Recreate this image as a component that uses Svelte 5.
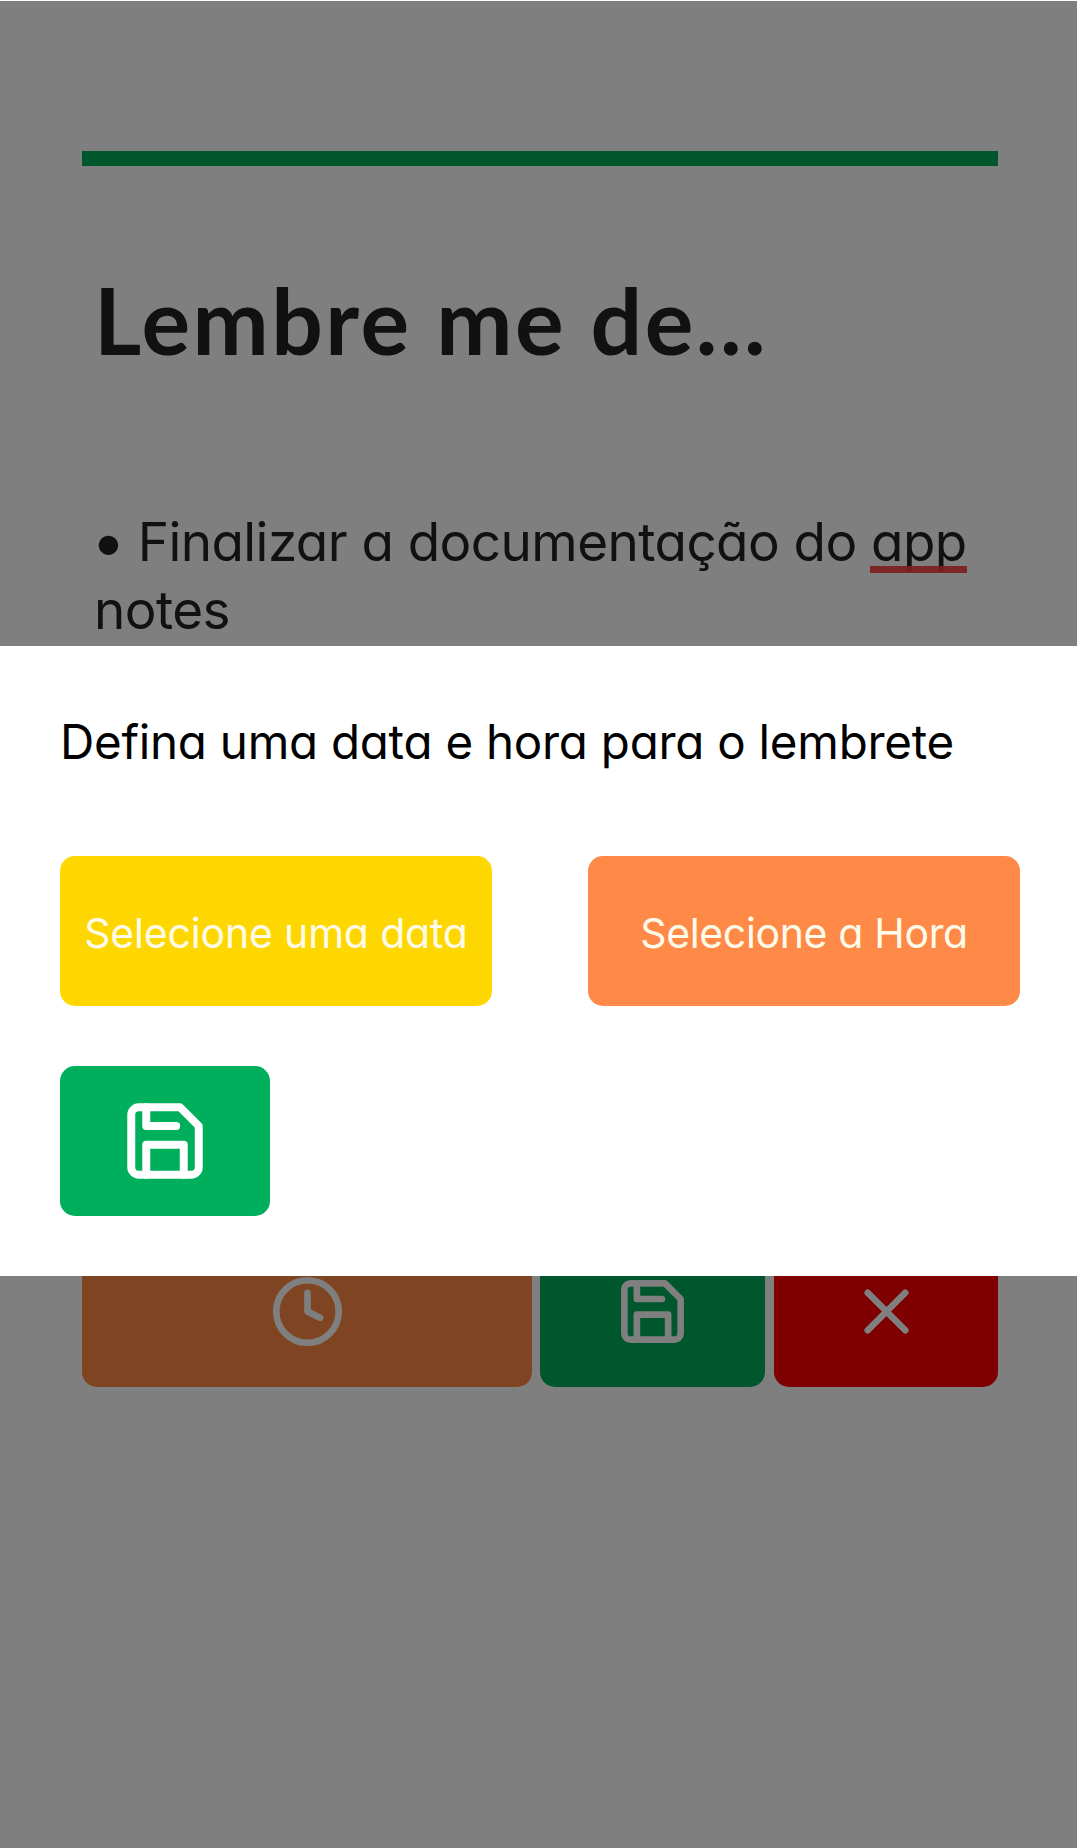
<script>
  let title = $state('Lembre me de...');
</script>

{#snippet saveIcon()}
  <svg class="icon" viewBox="0 0 24 24" aria-hidden="true">
    <path d="M19 21H5a2 2 0 0 1-2-2V5a2 2 0 0 1 2-2h11l5 5v11a2 2 0 0 1-2 2z" />
    <polyline points="17 21 17 13 7 13 7 21" />
    <polyline points="7 3 7 8 15 8" />
  </svg>
{/snippet}

<div class="screen">
  <main class="note">
    <div class="accent"></div>
    <h1>{title}</h1>
    <p class="body"><span class="bullet">•</span> Finalizar a documentação do <span class="misspelled">app</span> notes</p>
    <div class="actions">
      <button class="orange" aria-label="Lembrete">
        <svg class="icon" viewBox="0 0 24 24" aria-hidden="true">
          <circle cx="12" cy="12" r="10" />
          <polyline points="12 6 12 12 16 14" />
        </svg>
      </button>
      <button class="green" aria-label="Salvar">{@render saveIcon()}</button>
      <button class="red" aria-label="Fechar">
        <svg class="icon" viewBox="0 0 24 24" aria-hidden="true">
          <line x1="18" y1="6" x2="6" y2="18" />
          <line x1="6" y1="6" x2="18" y2="18" />
        </svg>
      </button>
    </div>
  </main>

  <div class="overlay">
    <section class="dialog">
      <h2>Defina uma data e hora para o lembrete</h2>
      <div class="pickers">
        <button class="yellow">Selecione uma data</button>
        <button class="orange">Selecione a Hora</button>
      </div>
      <button class="green save" aria-label="Salvar lembrete">{@render saveIcon()}</button>
    </section>
  </div>
</div>

<style>
  :global(body) {
    margin: 0;
    background: #fff;
  }
  .screen {
    position: relative;
    box-sizing: border-box;
    width: 1077px;
    height: 1848px;
    overflow: hidden;
    background: #fff;
    font-family: Inter, 'Noto Sans', sans-serif;
    font-feature-settings: 'cv11';
  }
  .note {
    display: flex;
    flex-direction: column;
    box-sizing: border-box;
    height: 1387px;
    padding: 151px 79px 0 82px;
  }
  .accent {
    flex: none;
    height: 15px;
    background: #00af58;
  }
  h1 {
    margin: 99px 0 0 12px;
    font: 700 91px/110px Lato, sans-serif;
    letter-spacing: 2.5px;
    color: #222;
  }
  .body {
    margin: 133px 0 0 12px;
    font-size: 53px;
    line-height: 68px;
    letter-spacing: -0.56px;
    color: #222;
  }
  .bullet {
    margin: 0 -2px 0 -3px;
    font-size: 62px;
    line-height: 0;
    vertical-align: -2px;
  }
  .misspelled {
    position: relative;
  }
  .misspelled::after {
    content: '';
    position: absolute;
    left: -1px;
    right: 0;
    bottom: 1px;
    height: 7px;
    background: rgba(250, 64, 64, 0.93);
  }
  button {
    display: flex;
    align-items: center;
    justify-content: center;
    box-sizing: border-box;
    height: 150px;
    margin: 0;
    padding: 0;
    border: 0;
    border-radius: 15px;
    font: inherit;
    font-feature-settings: inherit;
    color: #fffbea;
  }
  .icon {
    width: 75px;
    height: 75px;
    fill: none;
    stroke: #fff;
    stroke-width: 2.12;
    stroke-linecap: round;
    stroke-linejoin: round;
  }
  .actions {
    display: grid;
    grid-template-columns: 450px 225px 225px;
    gap: 8px;
    margin-top: auto;
  }
  .actions button {
    padding-bottom: 1px;
  }
  .actions .red {
    margin-left: 1px;
  }
  .yellow {
    background: #ffd700;
  }
  .orange {
    background: #ff8a47;
  }
  .green {
    background: #00af5b;
  }
  .red {
    background: #ff0000;
  }
  .overlay {
    position: absolute;
    inset: 1px 0 0;
    display: flex;
    flex-direction: column;
    box-sizing: border-box;
    padding-top: 645px;
    background: rgba(0, 0, 0, 0.5);
  }
  .dialog {
    box-sizing: border-box;
    height: 630px;
    padding: 59px 57px 60px 60px;
    background: #fff;
  }
  h2 {
    margin: 0 0 78px;
    font-size: 47.5px;
    font-weight: 400;
    line-height: 73px;
    letter-spacing: -0.25px;
    white-space: nowrap;
    color: #000;
  }
  .pickers {
    display: flex;
    justify-content: space-between;
    margin-bottom: 60px;
  }
  .pickers button {
    width: 432px;
    padding-top: 3px;
    font-size: 41px;
    letter-spacing: -0.35px;
  }
  .pickers .yellow {
    letter-spacing: -0.18px;
  }
  .save {
    width: 210px;
  }
  .save .icon {
    width: 90px;
    height: 90px;
  }
</style>
